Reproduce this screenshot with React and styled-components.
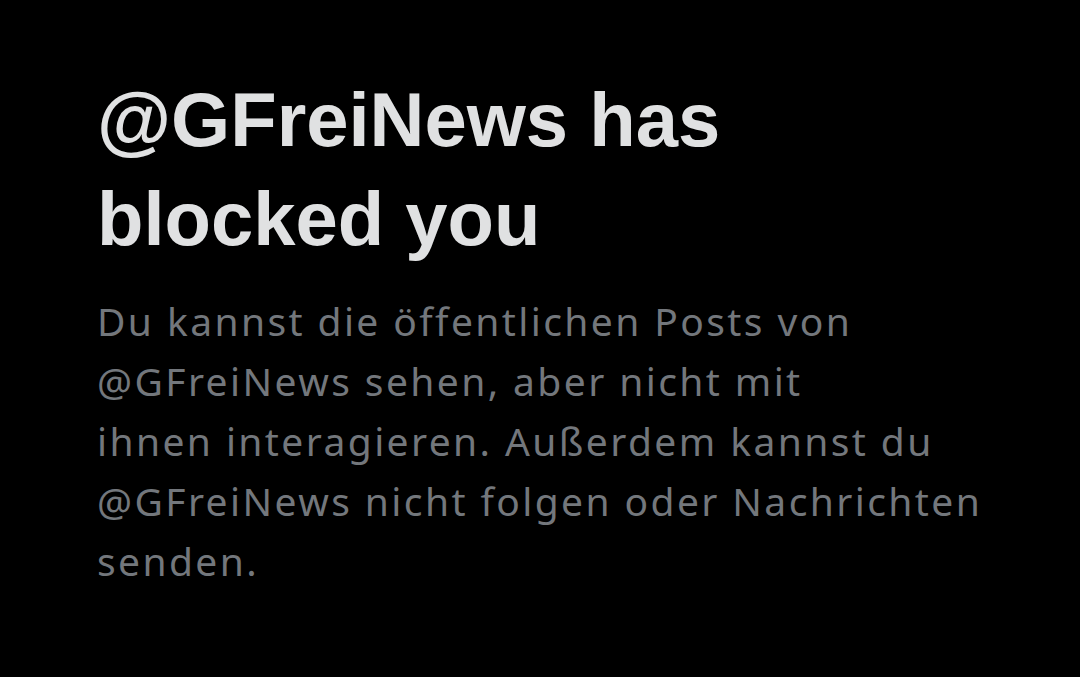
import React from "react";
import styled, { createGlobalStyle } from "styled-components";

const Global = createGlobalStyle`
  html, body {
    margin: 0;
    background: #000;
  }
`;

const Page = styled.main`
  min-height: 677px;
  background: #000;
  padding: 70px 0 0 97px;
  box-sizing: border-box;
`;

const Title = styled.h1`
  margin: 0;
  font-family: "Liberation Sans", Arial, sans-serif;
  font-weight: 700;
  font-size: 76px;
  line-height: 99px;
  color: #e0e1e2;
  white-space: nowrap;
`;

const Body = styled.p`
  margin: 23px 0 0;
  font-family: "Noto Sans", "Open Sans", sans-serif;
  font-size: 39px;
  letter-spacing: 2.4px;
  line-height: 60px;
  color: #73777c;
  white-space: nowrap;
`;

export default function App() {
  return (
    <>
      <Global />
      <Page>
        <Title>
          @GFreiNews has
          <br />
          blocked you
        </Title>
        <Body>
          Du kannst die öffentlichen Posts von
          <br />
          @GFreiNews sehen, aber nicht mit
          <br />
          ihnen interagieren. Außerdem kannst du
          <br />
          @GFreiNews nicht folgen oder Nachrichten
          <br />
          senden.
        </Body>
      </Page>
    </>
  );
}
